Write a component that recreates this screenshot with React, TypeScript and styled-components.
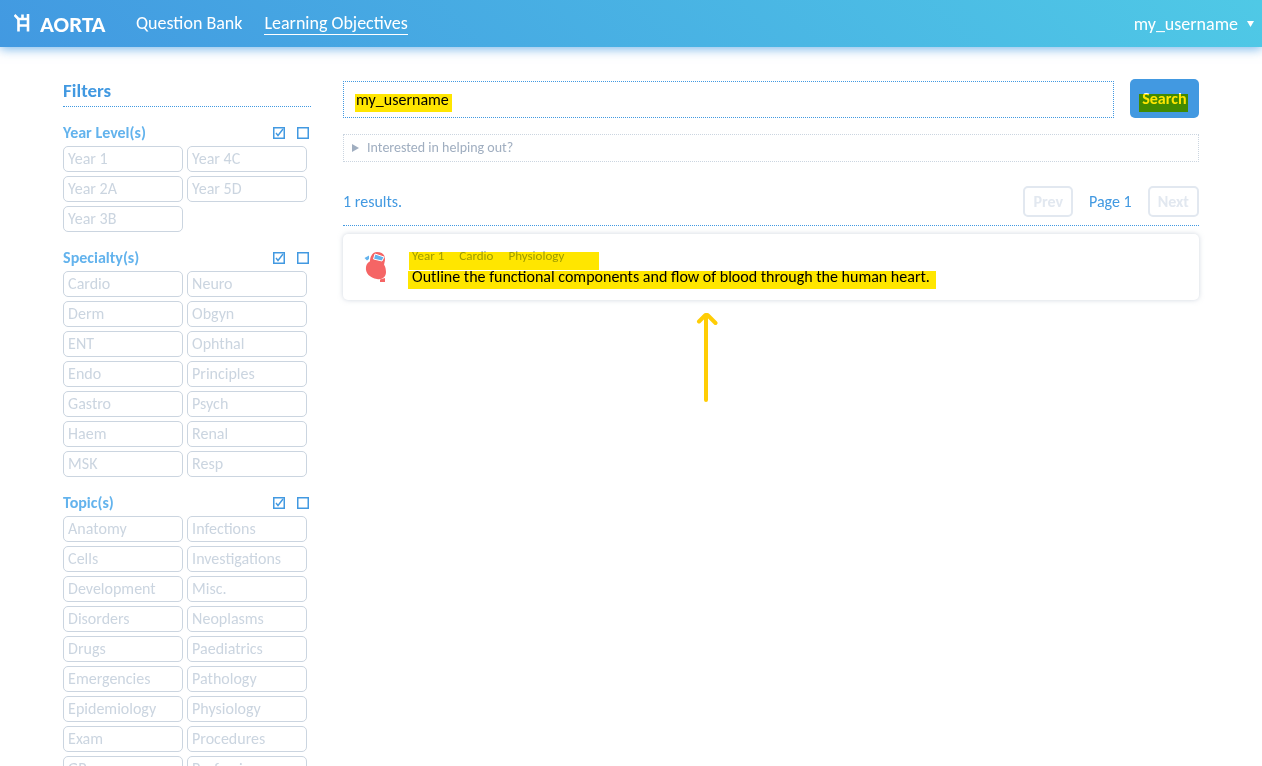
import React, { useState } from 'react';
import styled, { createGlobalStyle, css } from 'styled-components';

const GlobalStyle = createGlobalStyle`
  *, *::before, *::after { box-sizing: border-box; }
  html, body { margin: 0; background: #fff; }
  body, button, input { font-family: Carlito, Lato, "Liberation Sans", sans-serif; }
  button { cursor: pointer; }
  h1, h2, h3, p { margin: 0; }
`;

const Page = styled.div`
  height: 100vh;
  overflow: hidden;
`;

const Header = styled.header`
  display: flex;
  align-items: center;
  height: 47px;
  padding: 0 8px 0 14px;
  color: #fff;
  background: linear-gradient(45deg, #4299e1, #4fc9e6);
  box-shadow: 0 2px 10px rgba(66, 153, 225, 0.7);
`;

const Brand = styled.a`
  display: flex;
  align-items: center;
  gap: 10px;
  width: 122px;
  color: inherit;
  font-size: 23px;
  font-weight: 700;
  line-height: 24px;
  text-decoration: none;

  svg {
    margin-bottom: 2px;
  }
`;

const Nav = styled.nav`
  display: flex;
  flex: 1;
  gap: 22px;
`;

const NavLink = styled.a<{ $active?: boolean }>`
  color: inherit;
  font-size: 18px;
  line-height: 22px;
  text-decoration: none;
  border-bottom: 1px solid ${p => (p.$active ? '#fff' : 'transparent')};
`;

const UserMenu = styled.button`
  display: flex;
  align-items: center;
  gap: 8px;
  padding: 0;
  border: 0;
  background: none;
  color: #fff;
  font-size: 18px;
  line-height: 22px;
`;

const Body = styled.div`
  display: flex;
  align-items: flex-start;
  gap: 32px;
  width: 90%;
  margin: 0 auto;
  padding-top: 32px;
`;

const Sidebar = styled.aside`
  flex: 0 0 248px;
`;

const SidebarTitle = styled.h2`
  padding-bottom: 3px;
  margin-bottom: 16px;
  border-bottom: 1px dotted #4299e1;
  color: #4299e1;
  font-size: 19px;
  line-height: 24px;
`;

const FilterGroup = styled.section`
  margin-bottom: 16px;
`;

const FilterHeading = styled.div`
  display: flex;
  align-items: center;
  gap: 12px;
  height: 20px;
  margin-bottom: 3px;
  padding-right: 2px;
`;

const FilterName = styled.h3`
  flex: 1;
  color: #63b3ed;
  font-size: 16px;
  line-height: 20px;
`;

const IconButton = styled.button`
  display: flex;
  padding: 0;
  border: 0;
  background: none;
  color: #4299e1;
`;

const Options = styled.div`
  display: grid;
  grid-template-columns: 120px 120px;
  grid-auto-flow: column;
  gap: 4px;
`;

const Option = styled.button<{ $on: boolean }>`
  height: 26px;
  padding: 0 4px;
  border: 1px solid ${p => (p.$on ? '#4299e1' : '#cbd5e0')};
  border-radius: 5px;
  background: #fff;
  color: ${p => (p.$on ? '#4299e1' : '#cbd5e0')};
  font-size: 16px;
  line-height: 24px;
  text-align: left;
`;

const Main = styled.main`
  position: relative;
  flex: 1;
  min-width: 0;
`;

const SearchForm = styled.form`
  display: flex;
  align-items: flex-end;
  gap: 16px;
`;

const SearchField = styled.div`
  position: relative;
  flex: 1;
`;

const SearchInput = styled.input`
  display: block;
  width: 100%;
  height: 37px;
  padding: 0 12px;
  border: 1px dotted #4299e1;
  border-radius: 0;
  outline: 0;
  color: #000;
  font-size: 16px;
`;

const SearchButton = styled.button`
  width: 69px;
  height: 39px;
  padding: 0;
  border: 0;
  border-radius: 5px;
  background: #4299e1;
  color: #fff;
  font-size: 16px;
  font-weight: 700;
`;

const marker = css`
  content: '';
  position: absolute;
  background: #ffe600;
  mix-blend-mode: multiply;
  pointer-events: none;
`;

const InputMarker = styled.span`
  ${marker}
  left: 12px;
  top: 13px;
  width: 97px;
  height: 18px;
`;

const Marked = styled.span<{ $top: number; $left: number; $right: number }>`
  position: relative;
  display: inline-block;
  &::after {
    ${marker}
    top: ${p => p.$top}px;
    left: -${p => p.$left}px;
    right: -${p => p.$right}px;
    height: 18px;
  }
`;

const Help = styled.details`
  margin-top: 16px;
  border: 1px dotted #cbd5e0;
  color: #a0aec0;
  font-size: 14px;
  line-height: 26px;
`;

const HelpSummary = styled.summary`
  display: flex;
  align-items: center;
  gap: 8px;
  padding-left: 8px;
  list-style: none;
  cursor: pointer;
`;

const ResultsBar = styled.div`
  display: flex;
  align-items: center;
  gap: 16px;
  margin-top: 24px;
  padding-bottom: 8px;
  border-bottom: 1px dotted #4299e1;
  color: #4299e1;
  font-size: 16px;
  line-height: 20px;
`;

const ResultCount = styled.p`
  flex: 1;
`;

const PagerButton = styled.button`
  height: 31px;
  padding: 0 8px;
  border: 2px solid #e2e8f0;
  border-radius: 5px;
  background: #fff;
  color: #e2e8f0;
  font-size: 16px;
  font-weight: 700;
`;

const Card = styled.article`
  display: flex;
  align-items: center;
  gap: 24px;
  height: 66px;
  margin-top: 8px;
  padding: 0 21px;
  border-radius: 5px;
  background: #fff;
  box-shadow: 0 0 5px rgba(160, 174, 192, 0.5);
`;

const CardText = styled.div`
  display: flex;
  flex-direction: column;
  align-items: flex-start;
`;

const Tags = styled.div`
  display: flex;
  gap: 15px;
  color: #a0aec0;
  font-size: 13px;
  line-height: 20px;
`;

const Question = styled.p`
  color: #000;
  font-size: 16px;
  line-height: 22px;
`;

const Pointer = styled.svg`
  position: absolute;
  top: 233px;
  left: 41%;
`;

const TowerIcon = () => (
  <svg width="16" height="18" viewBox="0 0 16 18" fill="none" stroke="#fff" aria-hidden="true">
    <path d="M0.5 1L4 4.5M8.5 0.5V4M14 0V17.5M4.5 4V17.5" strokeWidth="2.6" />
    <path d="M3.2 5H15M4 11.5H14" strokeWidth="2.6" />
  </svg>
);

const CheckedIcon = () => (
  <svg width="12" height="12" viewBox="0 0 12 12" fill="none" stroke="currentColor" aria-hidden="true">
    <rect x="0.75" y="0.75" width="10.5" height="10.5" strokeWidth="1.5" />
    <path d="M3 6L5 8.5L10 2" strokeWidth="1.4" />
  </svg>
);

const UncheckedIcon = () => (
  <svg width="12" height="12" viewBox="0 0 12 12" fill="none" stroke="currentColor" aria-hidden="true">
    <rect x="0.75" y="0.75" width="10.5" height="10.5" strokeWidth="1.5" />
  </svg>
);

const HeartIcon = () => (
  <svg width="24" height="32" viewBox="0 0 24 32" aria-hidden="true">
    <path d="M6 10C6 5 9 1 13 1C18 1 21 3 21 9L20 14H6Z" fill="#f56565" />
    <path d="M2 16C3 10 9 8 14 10C20 11 22 16 22 21C22 26 18 29 13 28C6 27 1 22 2 16Z" fill="#f56565" />
    <path d="M16 28.5L21 27V31H16Z" fill="#f56565" />
    <path d="M11 3L20 6L18 10L9.5 8Z" fill="#63b3ed" stroke="#fff" />
    <path d="M0.5 7L5 4.5V8L3 9.5Z" fill="#63b3ed" />
  </svg>
);

const groups = [
  { name: 'Year Level(s)', rows: 3, items: ['Year 1', 'Year 2A', 'Year 3B', 'Year 4C', 'Year 5D'] },
  {
    name: 'Specialty(s)',
    rows: 7,
    items: ['Cardio', 'Derm', 'ENT', 'Endo', 'Gastro', 'Haem', 'MSK', 'Neuro', 'Obgyn', 'Ophthal', 'Principles', 'Psych', 'Renal', 'Resp'],
  },
  {
    name: 'Topic(s)',
    rows: 9,
    items: [
      'Anatomy', 'Cells', 'Development', 'Disorders', 'Drugs', 'Emergencies', 'Epidemiology', 'Exam', 'GP',
      'Infections', 'Investigations', 'Misc.', 'Neoplasms', 'Paediatrics', 'Pathology', 'Physiology', 'Procedures', 'Profession',
    ],
  },
];

export default function App() {
  const [selected, setSelected] = useState<string[]>([]);
  const [query, setQuery] = useState('my_username');
  const toggle = (item: string) =>
    setSelected(s => (s.includes(item) ? s.filter(x => x !== item) : [...s, item]));

  return (
    <Page>
      <GlobalStyle />
      <Header>
        <Brand href="#"><TowerIcon />AORTA</Brand>
        <Nav>
          <NavLink href="#questions">Question Bank</NavLink>
          <NavLink href="#objectives" $active>Learning Objectives</NavLink>
        </Nav>
        <UserMenu type="button">
          my_username
          <svg width="8" height="8" viewBox="0 0 8 8" aria-hidden="true"><path d="M1 1H8L4.5 7Z" fill="#fff" /></svg>
        </UserMenu>
      </Header>
      <Body>
        <Sidebar>
          <SidebarTitle>Filters</SidebarTitle>
          {groups.map(g => (
            <FilterGroup key={g.name}>
              <FilterHeading>
                <FilterName>{g.name}</FilterName>
                <IconButton type="button" aria-label={`Select all: ${g.name}`} onClick={() => setSelected(s => [...new Set([...s, ...g.items])])}>
                  <CheckedIcon />
                </IconButton>
                <IconButton type="button" aria-label={`Clear: ${g.name}`} onClick={() => setSelected(s => s.filter(x => !g.items.includes(x)))}>
                  <UncheckedIcon />
                </IconButton>
              </FilterHeading>
              <Options style={{ gridTemplateRows: `repeat(${g.rows}, auto)` }}>
                {g.items.map(item => (
                  <Option key={item} type="button" $on={selected.includes(item)} aria-pressed={selected.includes(item)} onClick={() => toggle(item)}>
                    {item}
                  </Option>
                ))}
              </Options>
            </FilterGroup>
          ))}
        </Sidebar>
        <Main>
          <SearchForm onSubmit={e => e.preventDefault()}>
            <SearchField>
              <SearchInput aria-label="Search" value={query} onChange={e => setQuery(e.target.value)} />
              <InputMarker />
            </SearchField>
            <SearchButton type="submit"><Marked $top={5} $left={3} $right={1}>Search</Marked></SearchButton>
          </SearchForm>
          <Help>
            <HelpSummary>
              <svg width="7" height="8" viewBox="0 0 7 8" aria-hidden="true"><path d="M0 0L7 4L0 8Z" fill="#a0aec0" /></svg>
              Interested in helping out?
            </HelpSummary>
          </Help>
          <ResultsBar>
            <ResultCount>1 results.</ResultCount>
            <PagerButton type="button" disabled>Prev</PagerButton>
            <span>Page 1</span>
            <PagerButton type="button" disabled>Next</PagerButton>
          </ResultsBar>
          <Card>
            <HeartIcon />
            <CardText>
              <Marked $top={6} $left={3} $right={35}>
                <Tags><span>Year 1</span><span>Cardio</span><span>Physiology</span></Tags>
              </Marked>
              <Marked $top={5} $left={4} $right={6}>
                <Question>Outline the functional components and flow of blood through the human heart.</Question>
              </Marked>
            </CardText>
          </Card>
          <Pointer width="24" height="92" viewBox="0 0 24 92" fill="none" stroke="#ffcd05" strokeWidth="4" strokeLinecap="round" strokeLinejoin="round" aria-hidden="true">
            <path d="M12 88V4M5 9.5L11.5 3H13.5L21.5 11" />
          </Pointer>
        </Main>
      </Body>
    </Page>
  );
}
